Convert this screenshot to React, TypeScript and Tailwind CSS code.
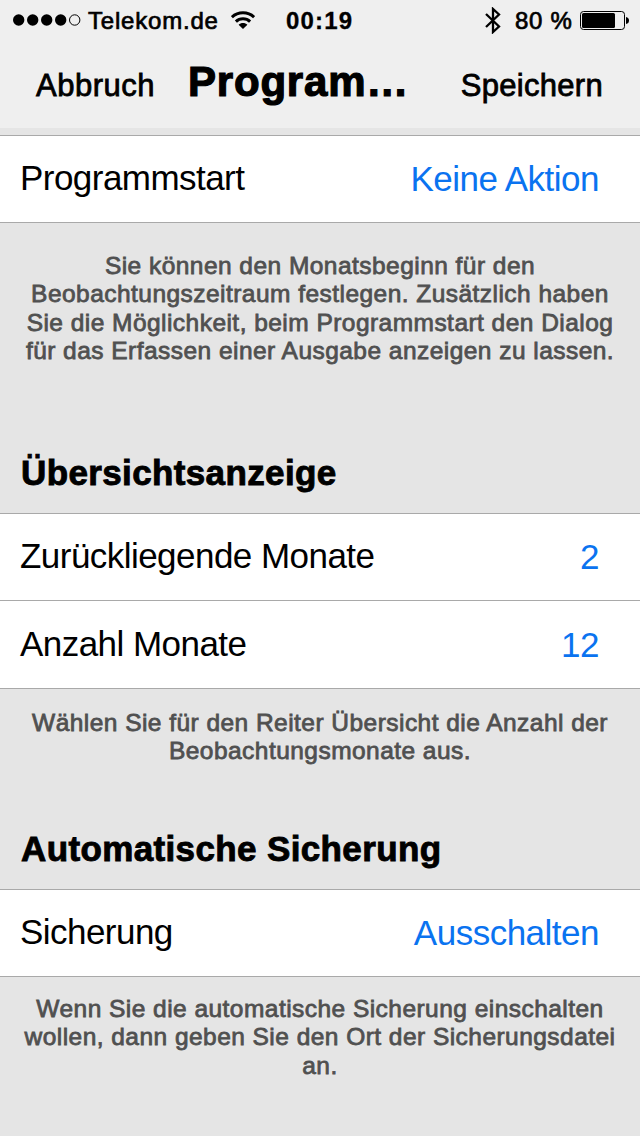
import React from 'react';

interface RowProps {
  label: string;
  value: string;
}

interface CaptionProps {
  lines: string[];
  className: string;
}

function StatusBar() {
  return (
    <div className="flex h-10 items-center pl-[13px] pr-[11px] text-[24px] leading-10 text-black">
      <svg width="68" height="12" viewBox="0 0 68 12">
        {[5.7, 19.7, 33.7, 47.7].map((cx) => (
          <circle key={cx} cx={cx} cy="6" r="5.7" />
        ))}
        <circle cx="61.7" cy="6" r="5.2" fill="none" stroke="black" />
      </svg>
      <span className="ml-[7px] w-[143px] pt-px tracking-[0.8px] [-webkit-text-stroke:0.7px_black]">Telekom.de</span>
      <svg width="24" height="18" viewBox="0 0 24 18" fill="none" stroke="black" strokeWidth="3">
        <path d="M0.9 6.2C7 0.4 17 0.4 23.1 6.2" />
        <path d="M4.9 10.6C8.8 6.8 15.2 6.8 19.1 10.6" />
        <path d="M12 18L7.6 13.8C10 11.5 14 11.5 16.4 13.8Z" fill="black" stroke="none" />
      </svg>
      <span className="ml-[31px] pt-px font-bold tracking-[1.2px] [-webkit-text-stroke:0.3px_black]">00:19</span>
      <svg className="ml-auto" width="16" height="27" viewBox="0 0 16 27" fill="none" stroke="black" strokeWidth="2.3">
        <path d="M1 7L14 19.5L8 25V2L14 7.5L1 20" />
      </svg>
      <span className="ml-[14px] w-[65px] whitespace-nowrap pt-px tracking-[0.7px] [-webkit-text-stroke:0.7px_black]">80 %</span>
      <svg width="49" height="19" viewBox="0 0 49 19">
        <rect x="0.5" y="0.5" width="44" height="18" rx="3" fill="none" stroke="black" />
        <rect x="2" y="2" width="33" height="15" rx="1.5" />
        <path d="M46 6Q49 6.5 49 9.5T46 13Z" />
      </svg>
    </div>
  );
}

function Header() {
  return (
    <header className="h-32 bg-[#efefef]">
      <StatusBar />
      <div className="flex h-[88px] items-baseline pl-9 pr-[37px] text-[31px] leading-[90px] text-black">
        <button className="w-[152px] text-left tracking-[0.5px] [-webkit-text-stroke:0.8px_black]">Abbruch</button>
        <h1 className="text-[42px] font-bold leading-[83px] tracking-[0.8px] [-webkit-text-stroke:1.2px_black]">Program…</h1>
        <button className="ml-auto tracking-[0.3px] [-webkit-text-stroke:0.8px_black]">Speichern</button>
      </div>
    </header>
  );
}

function SectionTitle({ children }: { children: React.ReactNode }) {
  return (
    <h2 className="pl-[21px] text-[35px] font-bold leading-10 tracking-[0.37px] text-black [-webkit-text-stroke:0.9px_black]">
      {children}
    </h2>
  );
}

function Row({ label, value }: RowProps) {
  return (
    <div className="flex h-[87px] items-center justify-between border-b border-[#a9a9a9] bg-white pl-5 pr-[41px] text-[35px] leading-10">
      <span className="pb-[3px] tracking-[-0.54px] text-black">{label}</span>
      <span className="pb-px tracking-[-0.5px] text-[#0a73f0]">{value}</span>
    </div>
  );
}

function Caption({ lines, className }: CaptionProps) {
  return (
    <p className={`text-center text-[24.5px] leading-[28.4px] tracking-[0.46px] whitespace-nowrap text-[#505050] [-webkit-text-stroke:0.8px_#505050] ${className}`}>
      {lines.map((line) => (
        <span key={line} className="block">{line}</span>
      ))}
    </p>
  );
}

export default function App() {
  return (
    <div className="flex h-[1136px] w-[640px] flex-col overflow-hidden bg-[#e5e5e5] font-['Liberation_Sans',sans-serif]">
      <Header />
      <section className="mt-[7px] h-[318px]">
        <div className="border-t border-[#a9a9a9]">
          <Row label="Programmstart" value="Keine Aktion" />
        </div>
        <Caption
          className="pt-[29px]"
          lines={[
            'Sie können den Monatsbeginn für den',
            'Beobachtungszeitraum festlegen. Zusätzlich haben',
            'Sie die Möglichkeit, beim Programmstart den Dialog',
            'für das Erfassen einer Ausgabe anzeigen zu lassen.',
          ]}
        />
      </section>
      <section className="h-[376px]">
        <SectionTitle>Übersichtsanzeige</SectionTitle>
        <div className="mt-5 border-t border-[#a9a9a9]">
          <Row label="Zurückliegende Monate" value="2" />
          <div className="flex flex-col bg-white pt-px">
            <Row label="Anzahl Monate" value="12" />
          </div>
        </div>
        <Caption
          className="pt-5"
          lines={['Wählen Sie für den Reiter Übersicht die Anzahl der', 'Beobachtungsmonate aus.']}
        />
      </section>
      <section>
        <SectionTitle>Automatische Sicherung</SectionTitle>
        <div className="mt-5 border-t border-[#a9a9a9]">
          <Row label="Sicherung" value="Ausschalten" />
        </div>
        <Caption
          className="pt-[18px]"
          lines={[
            'Wenn Sie die automatische Sicherung einschalten',
            'wollen, dann geben Sie den Ort der Sicherungsdatei',
            'an.',
          ]}
        />
      </section>
    </div>
  );
}
